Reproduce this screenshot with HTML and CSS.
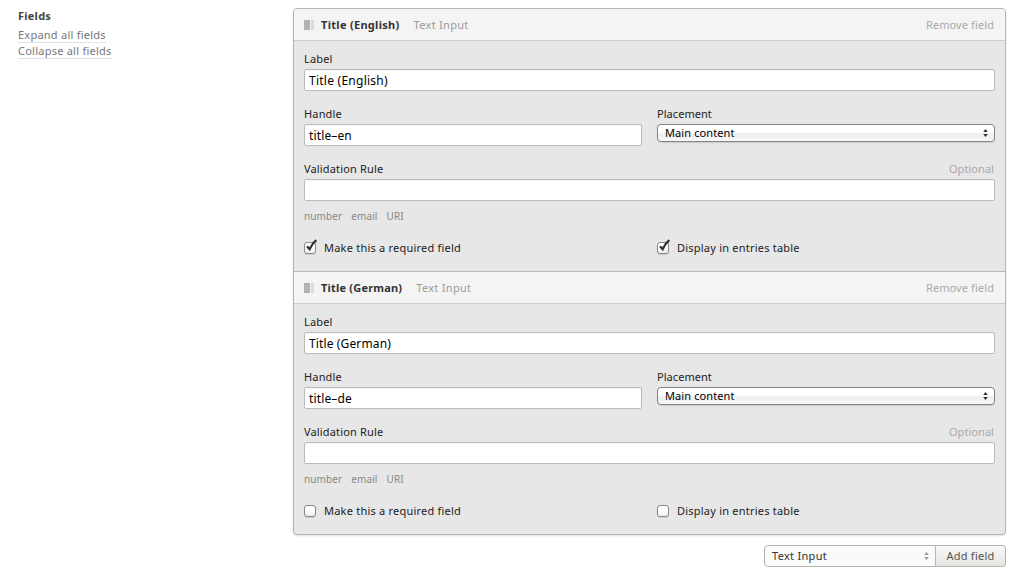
FILE: index.html
```html
<!DOCTYPE html>
<html lang="en">
<head>
<meta charset="utf-8">
<title>Fields</title>
<link rel="stylesheet" href="styles.css">
</head>
<body>
<svg class="defs" width="0" height="0">
  <symbol id="arrows" viewBox="0 0 5 8"><path d="M2.5 0 4.8 3H.2zM2.5 8 4.8 5H.2z" fill="currentColor"/></symbol>
  <symbol id="check" viewBox="0 0 14 14"><path d="M3 7.2 5.6 10.2Q8.2 4.6 12.3 1.2" fill="none" stroke="#333" stroke-width="2.3"/></symbol>
</svg>
<main class="page">
  <aside class="sidebar">
    <h2 class="heading">Fields</h2>
    <div><a class="toggle">Expand all fields</a></div>
    <div><a class="toggle">Collapse all fields</a></div>
  </aside>
  <form class="main">
    <div class="panel">
      <section class="entry">
        <header class="head"><i class="handle"></i><strong class="name">Title (English)</strong><span class="type">Text Input</span><a class="remove">Remove field</a></header>
        <div class="body">
          <div class="field"><label class="label">Label</label><input class="input title-en" value="Title (English)"></div>
          <div class="pair">
            <div class="field"><label class="label">Handle</label><input class="input" value="title&#8211;en"></div>
            <div class="field"><label class="label place">Placement</label><div class="select"><span>Main content</span><svg class="arrows"><use href="#arrows"/></svg></div></div>
          </div>
          <div class="field"><label class="label">Validation Rule<span class="optional">Optional</span></label><input class="input"></div>
          <div class="tags"><span>number</span><span>email</span><span>URI</span></div>
          <div class="pair">
            <label class="option"><span class="box"><svg class="tick"><use href="#check"/></svg></span><span>Make this a required field</span></label>
            <label class="option"><span class="box"><svg class="tick"><use href="#check"/></svg></span><span>Display in entries table</span></label>
          </div>
        </div>
      </section>
      <section class="entry">
        <header class="head"><i class="handle"></i><strong class="name name-de">Title (German)</strong><span class="type">Text Input</span><a class="remove">Remove field</a></header>
        <div class="body">
          <div class="field"><label class="label">Label</label><input class="input" value="Title (German)"></div>
          <div class="pair">
            <div class="field"><label class="label">Handle</label><input class="input" value="title&#8211;de"></div>
            <div class="field"><label class="label place">Placement</label><div class="select"><span>Main content</span><svg class="arrows"><use href="#arrows"/></svg></div></div>
          </div>
          <div class="field"><label class="label">Validation Rule<span class="optional">Optional</span></label><input class="input"></div>
          <div class="tags"><span>number</span><span>email</span><span>URI</span></div>
          <div class="pair">
            <label class="option"><span class="box"></span><span>Make this a required field</span></label>
            <label class="option"><span class="box"></span><span>Display in entries table</span></label>
          </div>
        </div>
      </section>
    </div>
    <div class="actions">
      <div class="picker"><span>Text Input</span><svg class="arrows"><use href="#arrows"/></svg></div>
      <button class="add" type="button">Add field</button>
    </div>
  </form>
</main>
</body>
</html>
```

FILE: styles.css
```css
* { box-sizing: border-box; }
body { margin: 0; background: #fff; color: #222; font: 11px/16px "Noto Sans", "Open Sans", sans-serif; letter-spacing: .1px; overflow: hidden; }
.defs { position: absolute; }
.page { display: flex; padding: 8px 18px; }
.sidebar { width: 275px; color: #777; letter-spacing: .24px; }
.heading { margin: 0 0 3px; font-size: 11px; line-height: 16px; color: #444; }
.sidebar div { height: 16px; }
.toggle { display: inline-block; line-height: 14px; border-bottom: 1px solid #dfe2e8; }
.main { width: 713px; }
.panel { border: 1px solid #b5b5b5; border-radius: 4px; background: #e7e7e7; overflow: hidden; box-shadow: 0 1px 2px rgba(0,0,0,.12); }
.entry + .entry { border-top: 1px solid #b9b9b9; }
.head { display: flex; align-items: center; height: 32px; padding: 0 11px 0 10px; background: #f4f4f4; border-bottom: 1px solid #ccc; color: #9b9b9b; }
.handle { width: 10px; height: 10px; margin-right: 7px; background: linear-gradient(90deg, #b3b3b3 6px, #f4f4f4 6px 7px, #dadada 7px); }
.name { margin-right: 14px; color: #333; letter-spacing: .3px; }
.name-de { letter-spacing: .2px; }
.type { letter-spacing: .3px; }
.remove { margin-left: auto; color: #aaa; }
.body { height: 230px; padding: 9px 10px 0; }
.field { margin-bottom: 14px; flex: 1; }
.label { display: flex; justify-content: space-between; line-height: 17px; height: 19px; letter-spacing: .16px; }
.place { letter-spacing: .05px; }
.optional { color: #aaa; padding-right: 1px; letter-spacing: .05px; }
.input { display: block; width: 100%; height: 22px; margin: 0; padding: 1px 4px 0; border: 1px solid #bbb; border-radius: 2px; background: #fff; color: #000; font: 12px "Noto Sans", sans-serif; letter-spacing: .13px; box-shadow: inset 0 1px 1px rgba(0,0,0,.04); }
.title-en { letter-spacing: .25px; }
.pair { display: flex; gap: 15px; }
.select, .picker { display: flex; align-items: center; justify-content: space-between; }
.select { height: 18px; padding: 0 6px 0 7px; border: 1px solid #858585; border-radius: 4px; background: linear-gradient(#fff 0 45%, #eee 55%, #f8f8f8); color: #000; box-shadow: 0 1px 1px rgba(0,0,0,.12); }
.arrows { width: 5px; height: 8px; color: #333; }
.tags { display: flex; gap: 9px; margin: -7px 0 16px; color: #888; font-size: 10px; }
.option { flex: 1; display: flex; align-items: center; height: 16px; letter-spacing: .22px; }
.box { position: relative; width: 12px; height: 12px; margin-right: 8px; border: 1px solid #888; border-radius: 3px; background: linear-gradient(#fff 45%, #eee); box-shadow: 0 1px 1px rgba(0,0,0,.12); }
.tick { position: absolute; left: -1px; top: -4px; width: 14px; height: 14px; }
.actions { display: flex; justify-content: flex-end; margin-top: 10px; }
.picker { width: 172px; height: 22px; padding: 0 6px 0 7px; border: 1px solid #b5b5b5; border-radius: 4px 0 0 4px; background: #fafaf9; color: #333; letter-spacing: .3px; }
.picker .arrows { color: #999; }
.add { width: 70px; height: 22px; padding: 0 0 2px; border: 1px solid #b5b5b5; border-left: 0; border-radius: 0 4px 4px 0; background: linear-gradient(#f9f9f8, #e5e5e2); color: #555; font: 11px "Noto Sans", sans-serif; letter-spacing: .25px; }
```
